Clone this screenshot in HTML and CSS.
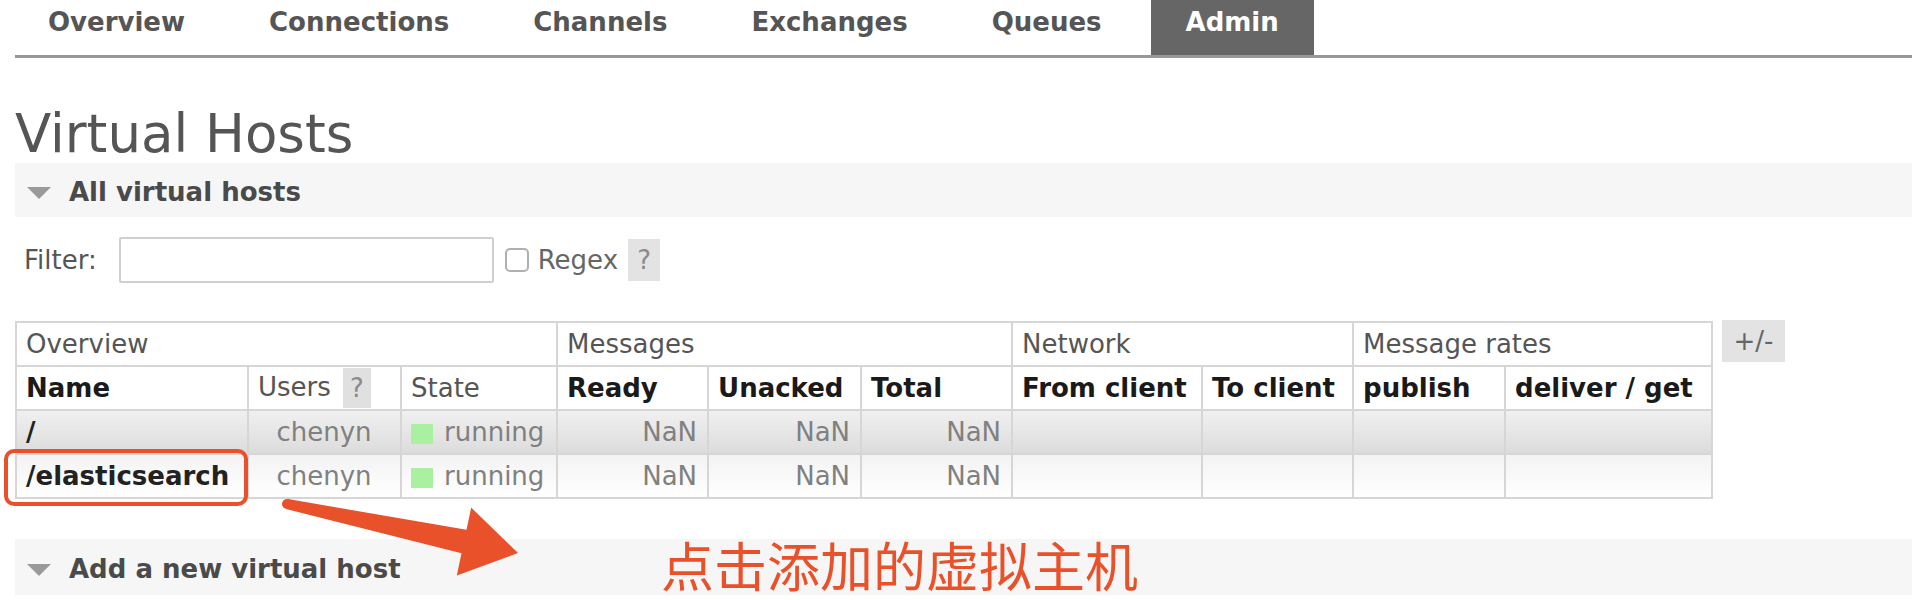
FILE: index.html
```html
<!DOCTYPE html>
<html lang="zh">
<head>
<meta charset="utf-8">
<title>Virtual Hosts</title>
<link rel="stylesheet" href="styles.css">
</head>
<body>
<div class="page">
  <ul class="nav">
    <li class="first"><a>Overview</a></li>
    <li><a>Connections</a></li>
    <li><a>Channels</a></li>
    <li><a>Exchanges</a></li>
    <li><a>Queues</a></li>
    <li class="active"><a>Admin</a></li>
  </ul>

  <h1>Virtual Hosts</h1>

  <div class="section-head"><span class="tri"></span><span>All virtual hosts</span></div>

  <div class="filter-row">
    <label class="filter-label">Filter:</label>
    <input class="filter-input" type="text">
    <span class="checkbox"></span>
    <span class="regex">Regex</span>
    <span class="help">?</span>
  </div>

  <div class="table-wrap">
    <table class="list">
      <colgroup>
        <col class="c-name"><col class="c-users"><col class="c-state">
        <col class="c-ready"><col class="c-unacked"><col class="c-total">
        <col class="c-from"><col class="c-to">
        <col class="c-pub"><col class="c-deliver">
      </colgroup>
      <thead>
        <tr class="group">
          <th colspan="3">Overview</th>
          <th colspan="3">Messages</th>
          <th colspan="2">Network</th>
          <th colspan="2">Message rates</th>
        </tr>
        <tr class="cols">
          <th>Name</th>
          <th class="plain">Users<span class="help-inline">?</span></th>
          <th class="plain">State</th>
          <th>Ready</th>
          <th>Unacked</th>
          <th>Total</th>
          <th>From client</th>
          <th>To client</th>
          <th>publish</th>
          <th>deliver / get</th>
        </tr>
      </thead>
      <tbody>
        <tr class="alt1">
          <td class="name">/</td>
          <td class="center">chenyn</td>
          <td><span class="status-green"></span>running</td>
          <td class="num">NaN</td>
          <td class="num">NaN</td>
          <td class="num">NaN</td>
          <td></td><td></td><td></td><td></td>
        </tr>
        <tr class="alt2">
          <td class="name">/elasticsearch</td>
          <td class="center">chenyn</td>
          <td><span class="status-green"></span>running</td>
          <td class="num">NaN</td>
          <td class="num">NaN</td>
          <td class="num">NaN</td>
          <td></td><td></td><td></td><td></td>
        </tr>
      </tbody>
    </table>
    <span class="plusminus">+/-</span>
  </div>

  <div class="section-head second"><span class="tri"></span><span>Add a new virtual host</span></div>

  <div class="annot-box"></div>
  <svg class="annot-arrow" viewBox="0 0 600 600" width="600" height="600">
    <polygon points="288,499.1 466.5,529.8 471.2,507.6 518,553 456.8,575.4 461.5,553.2 286,508.9" fill="#e8512a"/>
    <circle cx="287" cy="504" r="5" fill="#e8512a"/>
  </svg>
  <div class="annot-text">点击添加的虚拟主机</div>
</div>
</body>
</html>
```

FILE: styles.css
```css
html, body {
  margin: 0;
  padding: 0;
  overflow: hidden;
  background: #fff;
}

body {
  font-family: "DejaVu Sans", Verdana, sans-serif;
  font-size: 26px;
  color: #484848;
}

.page {
  position: relative;
  padding-left: 15px;
  height: 600px;
}

/* top menu */
.nav {
  list-style: none;
  margin: 0;
  padding: 0;
  display: flex;
  gap: 14px;
  height: 55px;
  border-bottom: 3px solid #979797;
}

.nav li a {
  display: block;
  height: 55px;
  line-height: 44px;
  padding: 0 35px;
  font-weight: bold;
  color: #555;
}

.nav li.first a {
  padding-left: 33px;
}

.nav li.active a {
  background: #666;
  color: #fff;
}

h1 {
  margin: 47px 0 0;
  font-size: 53px;
  line-height: 57px;
  height: 57px;
  font-weight: normal;
  color: #555;
}

/* collapsible section header */
.section-head {
  margin-top: 1px;
  height: 54px;
  box-sizing: border-box;
  padding: 5px 0 0 12px;
  line-height: 49px;
  background: #f6f6f6;
  font-weight: bold;
  color: #4a4a4a;
  display: flex;
  align-items: center;
}

.section-head.second {
  margin-top: 40px;
  height: 56px;
}

.tri {
  width: 0;
  height: 0;
  border-left: 12px solid transparent;
  border-right: 12px solid transparent;
  border-top: 12px solid #9a9a9a;
  margin-right: 18px;
}

/* filter */
.filter-row {
  display: flex;
  align-items: center;
  margin-top: 20px;
  height: 46px;
}

.filter-label {
  margin-left: 9px;
  margin-right: 22px;
  color: #555;
}

.filter-input {
  width: 375px;
  height: 46px;
  box-sizing: border-box;
  border: 2px solid #cfcfcf;
  border-radius: 2px;
  padding: 0;
  margin: 0;
  background: #fff;
}

.checkbox {
  width: 24px;
  height: 24px;
  box-sizing: border-box;
  border: 2px solid #b0b0b0;
  border-radius: 5px;
  margin-left: 11px;
  margin-right: 9px;
  background: #fff;
}

.regex {
  color: #666;
  margin-right: 10px;
}

.help {
  width: 32px;
  height: 42px;
  line-height: 42px;
  text-align: center;
  background: #e3e3e3;
  color: #8a8a8a;
}

/* table */
.table-wrap {
  display: flex;
  align-items: flex-start;
  gap: 9px;
  margin-top: 38px;
}

table.list {
  border-collapse: collapse;
  table-layout: fixed;
  width: 1696px;
}

.c-name { width: 232px; }
.c-users { width: 153px; }
.c-state { width: 156px; }
.c-ready { width: 151px; }
.c-unacked { width: 153px; }
.c-total { width: 151px; }
.c-from { width: 190px; }
.c-to { width: 151px; }
.c-pub { width: 152px; }
.c-deliver { width: 207px; }

table.list th,
table.list td {
  border: 2px solid #d6d6d6;
  padding: 0 10px 0 9px;
  height: 44px;
  box-sizing: border-box;
  white-space: nowrap;
  vertical-align: middle;
}

table.list th {
  text-align: left;
}

tr.group th {
  font-weight: normal;
  color: #555;
  background: #fff;
}

tr.cols th {
  font-weight: bold;
  color: #1a1a1a;
  background: #fff;
}

tr.cols th.plain {
  font-weight: normal;
  color: #555;
}

.help-inline {
  display: inline-block;
  width: 28px;
  height: 40px;
  line-height: 40px;
  margin-left: 12px;
  text-align: center;
  background: #e0e0e0;
  color: #8a8a8a;
  vertical-align: middle;
}

tr.alt1 td {
  background: linear-gradient(#f0f0f0, #dcdcdc);
}

tr.alt2 td {
  background: linear-gradient(#f3f3f3, #ffffff);
}

td {
  color: #808080;
}

td.name {
  font-weight: bold;
  color: #222;
}

td.center {
  text-align: center;
}

td.num {
  text-align: right;
}

.status-green {
  display: inline-block;
  width: 22px;
  height: 20px;
  background: #a9f0a0;
  margin-right: 11px;
  vertical-align: middle;
}

.plusminus {
  width: 63px;
  height: 42px;
  line-height: 42px;
  text-align: center;
  background: #e3e3e3;
  color: #666;
  margin-top: -1px;
}

/* annotation overlay */
.annot-box {
  position: absolute;
  left: 4px;
  top: 449px;
  width: 244px;
  height: 57px;
  box-sizing: border-box;
  border: 4px solid #e8512a;
  border-radius: 10px;
}

.annot-arrow {
  position: absolute;
  left: 0;
  top: 0;
  pointer-events: none;
}

.annot-text {
  position: absolute;
  left: 661px;
  top: 538px;
  font-family: "Noto Sans CJK SC", sans-serif;
  font-size: 53px;
  line-height: 53px;
  color: #e8512a;
  white-space: nowrap;
}
```
